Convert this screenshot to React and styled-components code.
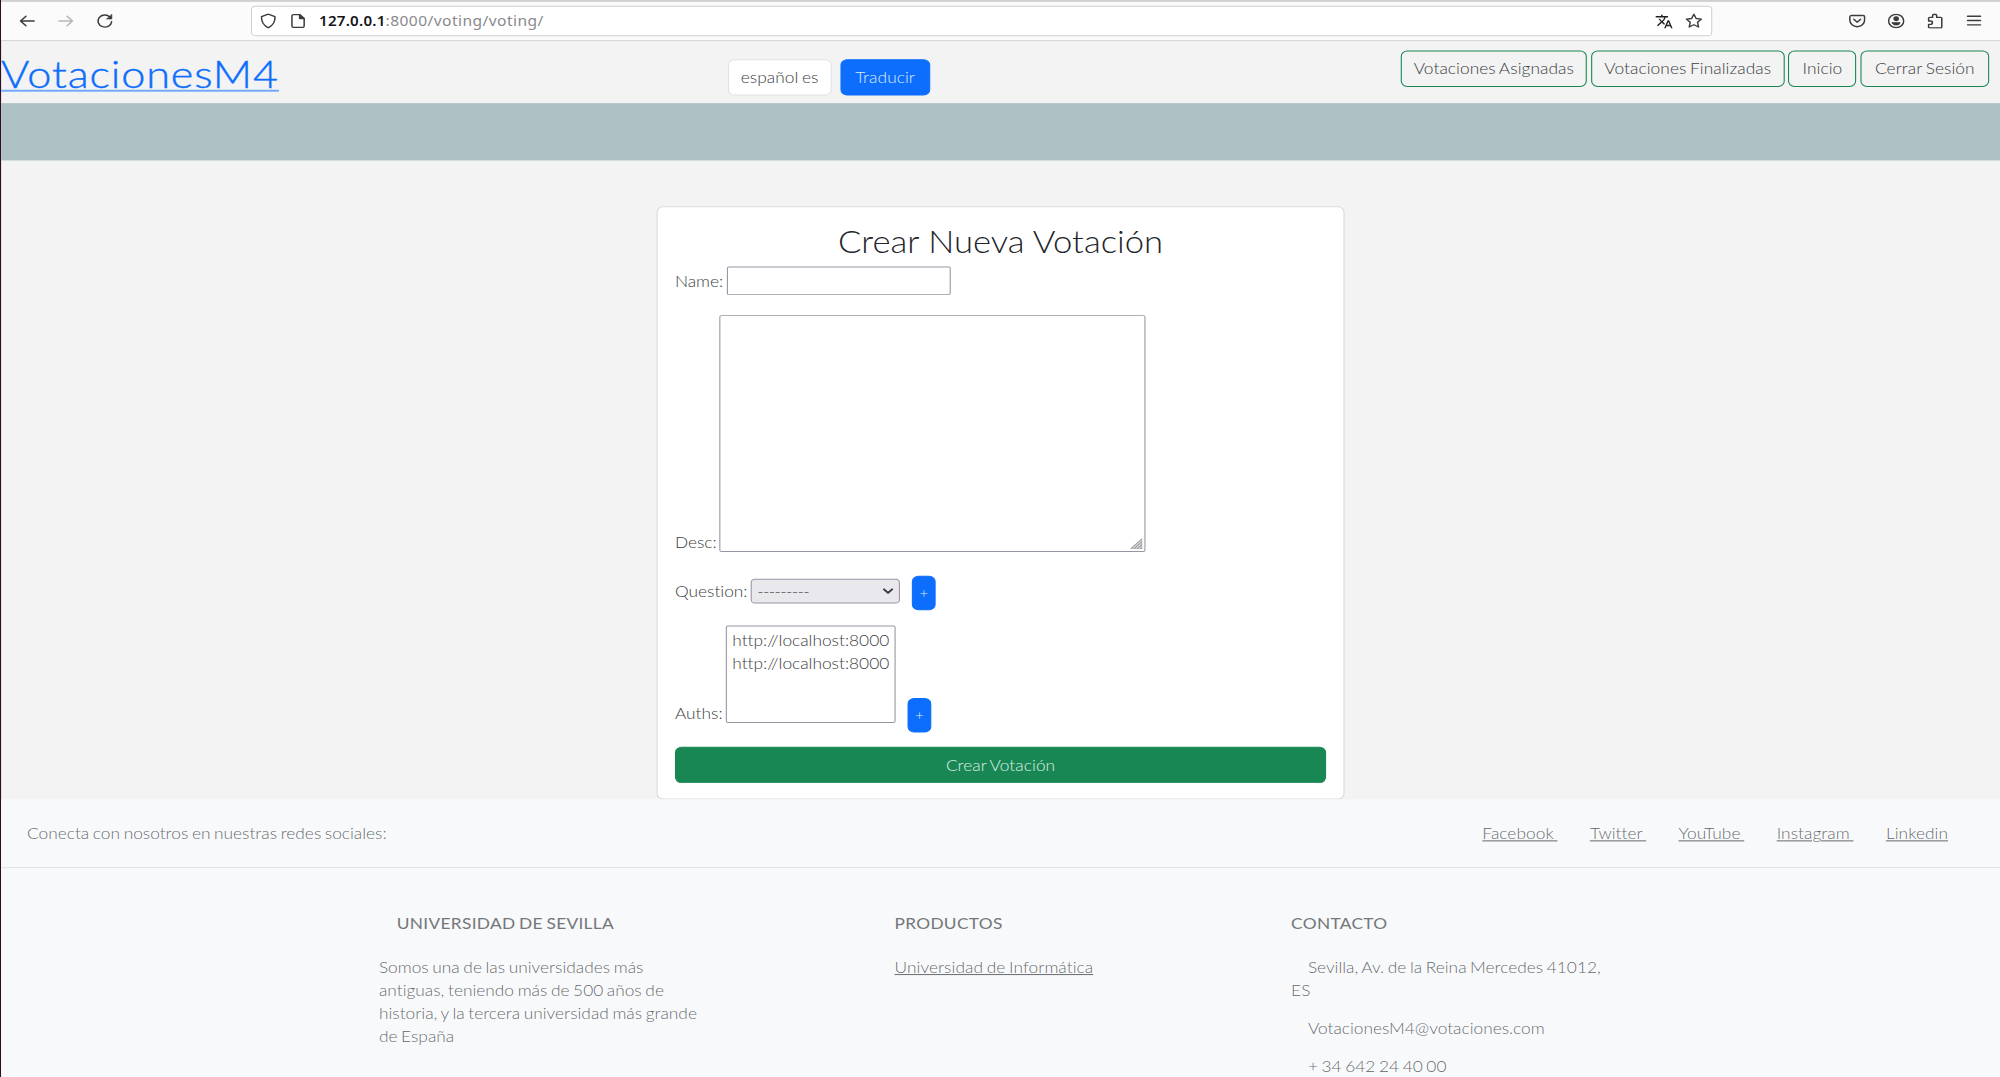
import React from "react";
import styled, { createGlobalStyle, css } from "styled-components";
import { MdTranslate } from "react-icons/md";

const SCALE_X = 2000 / 1849;
const SCALE_Y = 0.955;

const GlobalStyle = createGlobalStyle`
  *, *::before, *::after { box-sizing: border-box; }
  html, body { margin: 0; height: 1077px; overflow: hidden; }
  body { background: #f8f9fb; }
`;

const Window = styled.div`
  display: flex;
  flex-direction: column;
  width: 1849px;
  height: 1128px;
  overflow: hidden;
  transform: scale(${SCALE_X}, ${SCALE_Y});
  transform-origin: 0 0;
  border-left: 1px solid #2c0f22;
  background: #f3f3f3;
  color: #3a3e42;
  font: 300 16px/1.5 Lato, "Liberation Sans", sans-serif;
  font-variant-ligatures: none;
  word-spacing: -1px;
`;

/* ---------- browser toolbar ---------- */

const Toolbar = styled.div`
  flex: none;
  display: flex;
  align-items: center;
  height: 43px;
  padding: 0 16px 0 16px;
  border-top: 2px solid #d0d0d0;
  border-bottom: 1px solid #d3d3d3;
  background: #fbfbfb;
  color: #3c3c3c;
`;

const IconGroup = styled.div`
  display: flex;
  gap: ${(p) => p.$gap}px;
`;

const Glyph = styled.svg`
  display: block;
  width: ${(p) => p.$size || 16}px;
  height: ${(p) => p.$size || 16}px;
  fill: none;
  stroke: currentColor;
  stroke-width: ${(p) => p.$stroke || 1.4};
  stroke-linecap: round;
  stroke-linejoin: round;
  opacity: ${(p) => (p.$dim ? 0.35 : 1)};
`;

const AddressBar = styled.div`
  display: flex;
  align-items: center;
  width: 1351px;
  height: 32px;
  margin: 0 auto 0 127px;
  padding: 0 8px 0 7px;
  border: 1px solid #d0d0d2;
  border-radius: 4px;
  background: #fff;
`;

const Url = styled.span`
  flex: 1;
  margin-left: 11px;
  font: 400 14.4px/20px "Noto Sans", "Open Sans", sans-serif;
  letter-spacing: 0.4px;
  color: #8a8a8e;
  b {
    font-size: 14px;
    font-weight: 600;
    letter-spacing: 0.2px;
    color: #15141a;
  }
`;

/* ---------- site header ---------- */

const Header = styled.header`
  flex: none;
  display: grid;
  grid-template-columns: 672px 1fr auto;
  height: 65px;
  padding-right: 10px;
`;

const Brand = styled.a`
  padding-top: 10px;
  font-size: 40px;
  line-height: 48px;
  letter-spacing: 0.8px;
  color: #0d6efd;
  -webkit-text-stroke: 0.4px #0d6efd;
  text-decoration: underline;
  text-decoration-thickness: 2px;
  text-decoration-color: #6fa8fb;
  text-underline-offset: 2px;
`;

const LanguageForm = styled.form`
  display: flex;
  align-items: flex-start;
  gap: 8px;
  padding-top: 18.5px;
`;

const NavLinks = styled.nav`
  display: flex;
  align-items: flex-start;
  gap: 3.7px;
  padding-top: 9.5px;
`;

const variants = {
  primary: css`background: #0d6efd; border-color: #0d6efd; color: #dceaff;`,
  success: css`background: #198754; border-color: #198754; color: #dcefe6;`,
  outline: css`background: transparent; border-color: #198754; color: #3a3e42;`,
  plain: css`background: #fff; border-color: #dee2e6; color: #3a3e42;`,
};

const Button = styled.button`
  display: block;
  height: 38px;
  width: ${(p) => (p.$width ? `${p.$width}px` : "100%")};
  padding: 6px 0;
  border: 1px solid;
  border-radius: 6px;
  font: inherit;
  font-variant-ligatures: none;
  word-spacing: -1px;
  letter-spacing: 0.05px;
  text-align: center;
  white-space: nowrap;
  ${(p) => variants[p.$variant]}
`;

const Band = styled.div`
  flex: none;
  height: 60px;
  background: #aec2c5;
`;

/* ---------- form card ---------- */

const Main = styled.main`
  flex: none;
  display: flex;
  justify-content: center;
  padding-top: 48px;
`;

const Card = styled.form`
  width: 636px;
  height: 621px;
  padding: 17px 16px 16px;
  border: 1px solid #d9dadb;
  border-radius: 6px;
  background: #fff;
`;

const CardTitle = styled.h2`
  margin: 0 0 6.5px;
  font-weight: 300;
  font-size: 32px;
  line-height: 38.4px;
  text-align: center;
  color: #212529;
  word-spacing: 0;
`;

const Row = styled.div`
  display: flex;
  align-items: flex-end;
  height: ${(p) => p.$height}px;
  margin-bottom: ${(p) => p.$after}px;
`;

const Label = styled.label`
  margin: 0 ${(p) => p.$gap || 3}px ${(p) => p.$lift || 0}px 0;
`;

const fieldFrame = css`
  border: 1px solid #9696a2;
  border-radius: 2px;
  background: #fff;
  font: inherit;
  outline: none;
`;

const TextInput = styled.input`
  ${fieldFrame}
  width: 207px;
  height: 30px;
`;

const TextBox = styled.div`
  ${fieldFrame}
  display: flex;
  align-items: flex-end;
  justify-content: flex-end;
  width: 394px;
  height: 248px;
  padding: 2px;
`;

const Grip = styled.svg`
  width: 11px;
  height: 11px;
  fill: #dcdcdc;
  stroke: #9a9a9a;
  stroke-width: 1;
`;

const SelectBox = styled.div`
  ${fieldFrame}
  display: flex;
  align-items: center;
  justify-content: space-between;
  width: 138px;
  height: 26px;
  margin-bottom: 6.5px;
  padding: 0 4px 0 5px;
  border-radius: 4px;
  background: #e9e9ed;
  letter-spacing: -0.6px;
`;

const ListBox = styled.div`
  ${fieldFrame}
  width: 157px;
  height: 102px;
  margin-bottom: 10px;
  padding: 2px 4px 2px 5px;
`;

const Option = styled.div`
  height: 24px;
  line-height: 24px;
  white-space: nowrap;
`;

const AddButton = styled(Button)`
  height: 36px;
  margin-left: 11px;
  padding: 0;
  font-size: 14px;
  line-height: 34px;
`;

/* ---------- footer ---------- */

const Footer = styled.footer`
  flex: 1;
  background: #f8f9fb;
  color: rgba(33, 37, 41, 0.7);
`;

const Social = styled.section`
  display: flex;
  justify-content: space-between;
  padding: 24px 24px 23px;
  border-bottom: 1px solid #dee2e6;
`;

const SocialLinks = styled.div`
  display: flex;
  gap: 30px;
  margin-right: 24px;
`;

const Link = styled.a`
  color: inherit;
  text-decoration: underline;
  text-decoration-thickness: 1px;
  letter-spacing: 0.05px;
  white-space: pre;
`;

const Columns = styled.section`
  display: flex;
  justify-content: space-around;
  width: 1320px;
  margin: 48px auto 0;
`;

const Column = styled.div`
  width: ${(p) => p.$width}px;
  padding: 0 12px;
`;

const ColumnTitle = styled.h6`
  margin: 0 0 25px;
  font-weight: 400;
  font-size: 16px;
  line-height: 19.2px;
  letter-spacing: 0.28px;
  text-transform: uppercase;
  text-indent: ${(p) => (p.$indent ? 16.5 : 0)}px;
  color: #74777a;
`;

const Text = styled.p`
  margin: 0 0 16px;
  text-indent: ${(p) => (p.$indent ? 15.5 : 0)}px;
`;

const NAV = [
  { name: "Votaciones Asignadas", width: 172.5 },
  { name: "Votaciones Finalizadas", width: 178.7 },
  { name: "Inicio", width: 63 },
  { name: "Cerrar Sesión", width: 119 },
];
const SOCIAL = ["Facebook ", "Twitter ", "YouTube ", "Instagram ", "Linkedin"];
const AUTHS = ["http://localhost:8000", "http://localhost:8000"];

function BrowserToolbar() {
  return (
    <Toolbar>
      <IconGroup $gap={20}>
        <Glyph viewBox="0 0 16 16"><path d="M14.5 8H2M7 3L2 8l5 5" /></Glyph>
        <Glyph viewBox="0 0 16 16" $dim><path d="M1.5 8H14M9 3l5 5-5 5" /></Glyph>
        <Glyph viewBox="0 0 16 16">
          <path d="M14.2 8.6A6.3 6.3 0 1 1 12.6 3.8" />
          <path d="M14.4 1.3v4.6H9.8z" fill="currentColor" strokeWidth="0.6" />
        </Glyph>
      </IconGroup>
      <AddressBar>
        <IconGroup $gap={12}>
          <Glyph viewBox="0 0 16 16">
            <path d="M8 .8l6.200 2.600c.3 5.200-1.700 9.200-6.200 11.800C3.500 12.600 1.500 8.600 1.800 3.400z" />
          </Glyph>
          <Glyph viewBox="0 0 16 16">
            <path d="M3.300 1.300h5.900l4 4v8a1.400 1.400 0 0 1-1.400 1.400H3.300a1.400 1.400 0 0 1-1.400-1.400V2.700a1.400 1.400 0 0 1 1.400-1.400z" />
            <path d="M9 1.300v4.200h4.200z" fill="currentColor" />
          </Glyph>
        </IconGroup>
        <Url><b>127.0.0.1</b>:8000/voting/voting/</Url>
        <IconGroup $gap={11}>
          <MdTranslate size={17} color="#222" />
          <Glyph viewBox="0 0 16 16">
            <path d="M8 .9l2.100 4.500 4.900.6-3.600 3.400.9 4.900L8 11.900l-4.300 2.400.9-4.900L1 6l4.900-.6z" />
          </Glyph>
        </IconGroup>
      </AddressBar>
      <IconGroup $gap={20}>
        <Glyph viewBox="0 0 16 16">
          <path d="M2.600 2.200h10.800A1.400 1.400 0 0 1 14.800 3.600v3.600a6.800 6.800 0 0 1-13.600 0V3.600a1.400 1.400 0 0 1 1.400-1.400z" />
          <path d="M4.900 6.200L8 9.200l3.100-3" />
        </Glyph>
        <Glyph viewBox="0 0 16 16">
          <circle cx="8" cy="8" r="7" />
          <circle cx="8" cy="5.700" r="1.900" fill="currentColor" />
          <path d="M4.400 9.700h7.200c0 1.700-1.600 2.500-3.600 2.500s-3.600-.8-3.600-2.500z" fill="currentColor" strokeWidth="0.800" />
        </Glyph>
        <Glyph viewBox="0 0 16 16">
          <path d="M2 5.200c0-.6.400-1 1-1h2.700V2.800a1.900 1.900 0 0 1 3.800 0v1.400h3.700c.6 0 1 .4 1 1v9c0 .6-.4 1-1 1H3c-.6 0-1-.4-1-1v-2.600h1.700a1.800 1.800 0 0 0 0-3.600H2z" />
        </Glyph>
        <Glyph viewBox="0 0 16 16"><path d="M2 3h12M2 7.500h12M2 12h12" /></Glyph>
      </IconGroup>
    </Toolbar>
  );
}

function VotingForm() {
  return (
    <Card>
      <CardTitle>Crear Nueva Votación</CardTitle>
      <Row $height={30} $after={21}>
        <Label $lift={3} $gap={3.5}>Name:</Label>
        <TextInput type="text" />
      </Row>
      <Row $height={248} $after={25}>
        <Label $lift={-2} $gap={2}>Desc:</Label>
        <TextBox>
          <Grip viewBox="0 0 11 11"><path d="M0 11L11 0V11zM3 11L11 3M6 11l5-5M9 11l2-2" /></Grip>
        </TextBox>
      </Row>
      <Row $height={36} $after={16}>
        <Label $lift={8}>Question:</Label>
        <SelectBox>
          ---------
          <Glyph viewBox="0 0 16 16" $size={12} $stroke={2.6}>
            <path d="M3 5.500l5 5 5-5" />
          </Glyph>
        </SelectBox>
        <AddButton type="button" $variant="primary" $width={22}>+</AddButton>
      </Row>
      <Row $height={112} $after={15.5}>
        <Label $lift={8} $gap={3}>Auths:</Label>
        <ListBox>
          {AUTHS.map((url, i) => <Option key={i}>{url}</Option>)}
        </ListBox>
        <AddButton type="button" $variant="primary" $width={22}>+</AddButton>
      </Row>
      <Button type="button" $variant="success">Crear Votación</Button>
    </Card>
  );
}

export default function App() {
  return (
    <>
      <GlobalStyle />
      <Window>
        <BrowserToolbar />
        <Header>
          <Brand>VotacionesM4</Brand>
          <LanguageForm>
            <Button type="button" $variant="plain" $width={95.5}>español es</Button>
            <Button type="button" $variant="primary" $width={83.5}>Traducir</Button>
          </LanguageForm>
          <NavLinks>
            {NAV.map(({ name, width }) => (
              <Button key={name} $variant="outline" $width={width}>{name}</Button>
            ))}
          </NavLinks>
        </Header>
        <Band />
        <Main><VotingForm /></Main>
        <Footer>
          <Social>
            <span>Conecta con nosotros en nuestras redes sociales:</span>
            <SocialLinks>
              {SOCIAL.map((name) => <Link key={name}>{name}</Link>)}
            </SocialLinks>
          </Social>
          <Columns>
            <Column $width={330}>
              <ColumnTitle $indent>Universidad de Sevilla</ColumnTitle>
              <Text>
                Somos una de las universidades más antiguas, teniendo más de 500 años de
                historia, y la tercera universidad más grande de España
              </Text>
            </Column>
            <Column $width={220}>
              <ColumnTitle>Productos</ColumnTitle>
              <Text><Link>Universidad de Informática</Link></Text>
            </Column>
            <Column $width={330}>
              <ColumnTitle>Contacto</ColumnTitle>
              <Text $indent>Sevilla, Av. de la Reina Mercedes 41012, ES</Text>
              <Text $indent>VotacionesM4@votaciones.com</Text>
              <Text $indent>+ 34 642 24 40 00</Text>
            </Column>
          </Columns>
        </Footer>
      </Window>
    </>
  );
}
